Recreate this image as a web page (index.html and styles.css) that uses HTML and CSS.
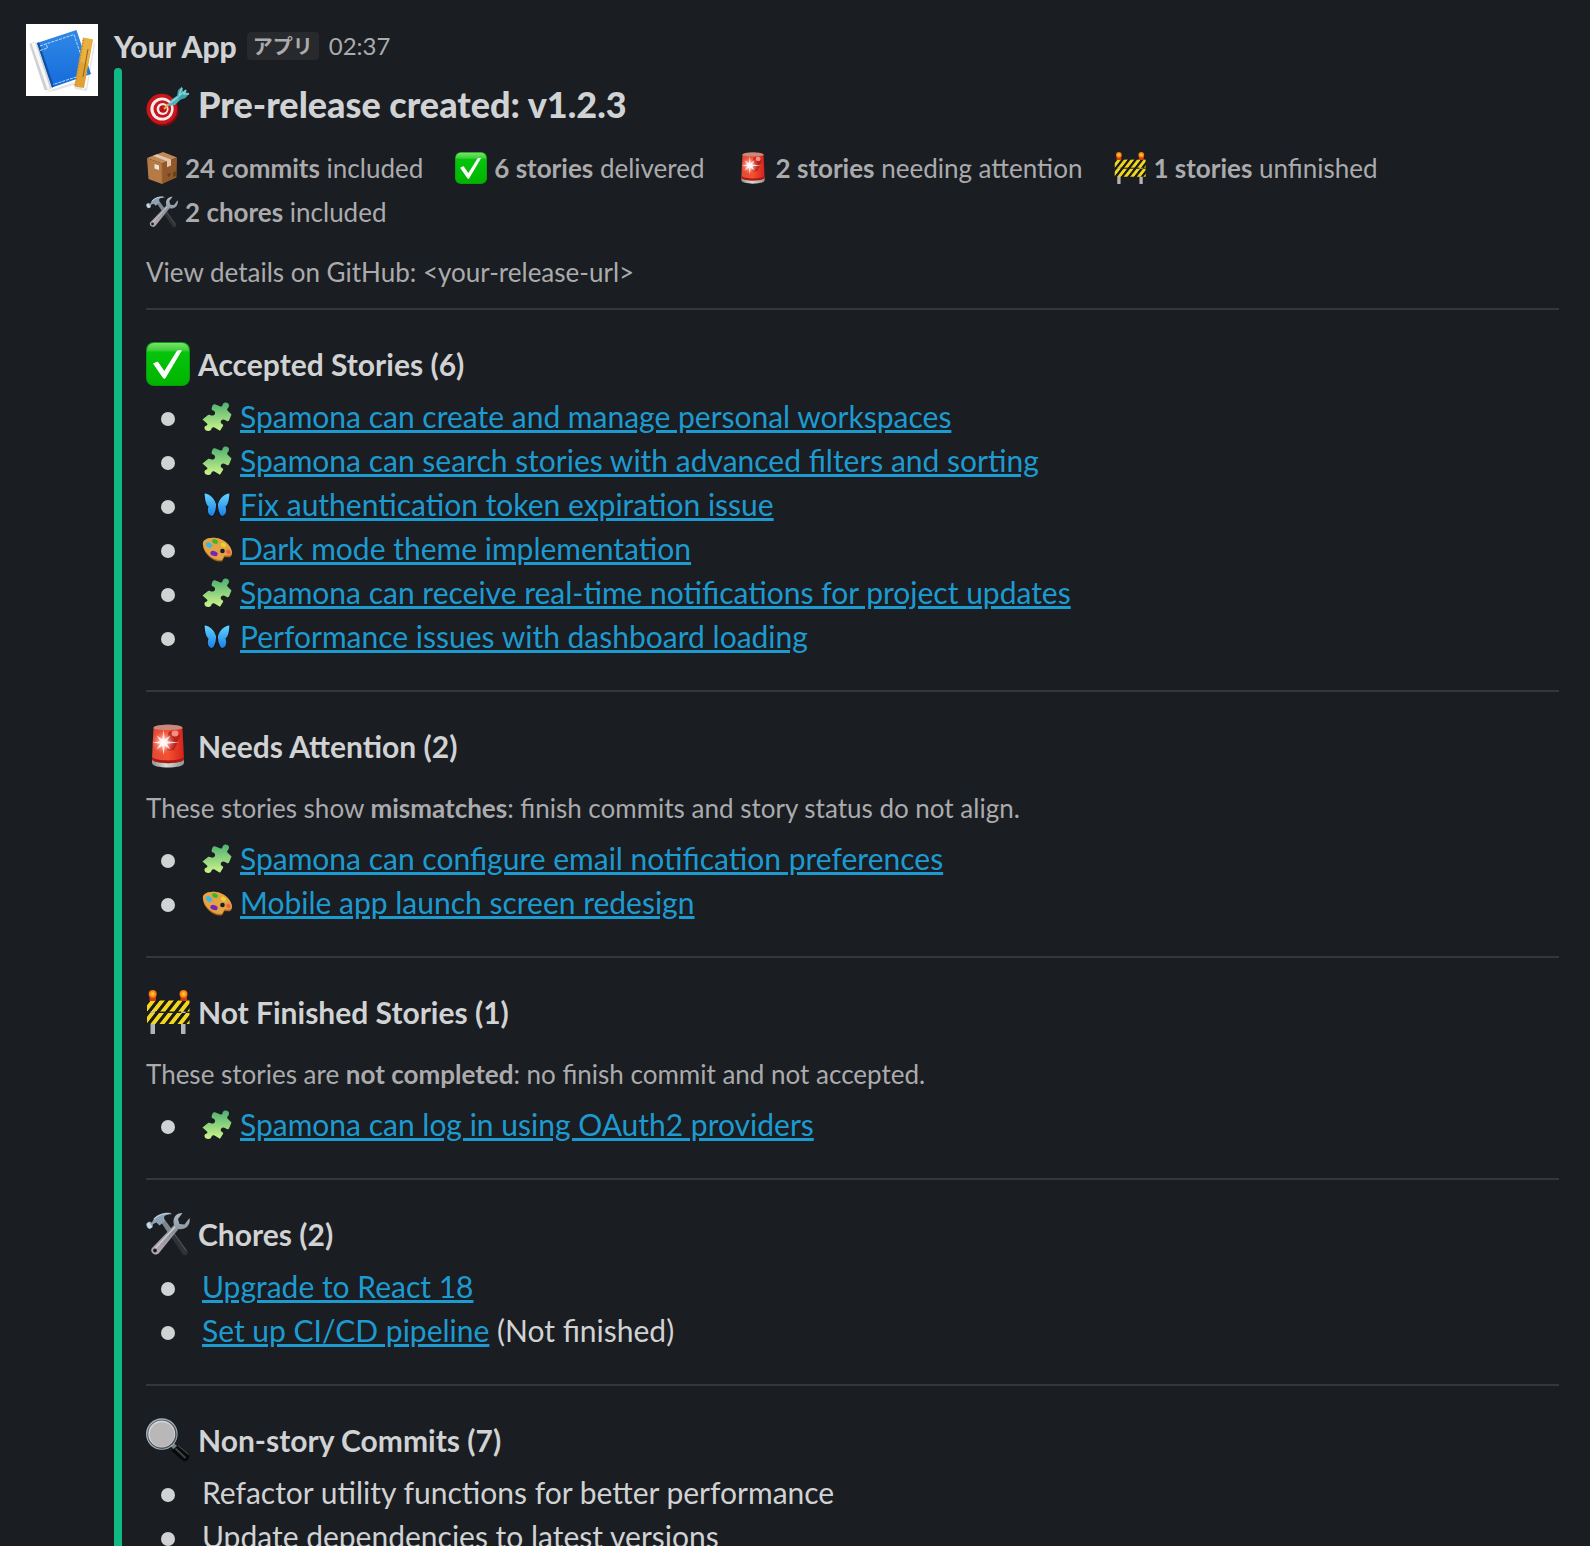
FILE: index.html
```html
<!DOCTYPE html>
<html lang="en">
<head>
<meta charset="utf-8">
<meta name="viewport" content="width=device-width, initial-scale=1">
<title>Pre-release created: v1.2.3</title>
<link rel="stylesheet" href="styles.css">
</head>
<body>
<svg class="sprite" aria-hidden="true">
  <defs>
    <linearGradient id="g-check" x1="0" y1="0" x2="0" y2="1"><stop offset="0" stop-color="#7be070"/><stop offset=".17" stop-color="#3fd03a"/><stop offset=".22" stop-color="#06c40c"/><stop offset="1" stop-color="#00b400"/></linearGradient>
    <linearGradient id="g-puzzle" x1="0" y1="0" x2="0" y2="1"><stop offset="0" stop-color="#4db072"/><stop offset="1" stop-color="#cdf58a"/></linearGradient>
    <linearGradient id="g-wing" x1="0" y1="0" x2="0" y2="1"><stop offset="0" stop-color="#63d4ff"/><stop offset="1" stop-color="#1b7fe6"/></linearGradient>
    <linearGradient id="g-siren" x1="0" y1="0" x2="1" y2="0"><stop offset="0" stop-color="#e04a38"/><stop offset=".5" stop-color="#f4502f"/><stop offset="1" stop-color="#d3221c"/></linearGradient>
    <radialGradient id="g-flare"><stop offset="0" stop-color="#fff"/><stop offset=".35" stop-color="#ffc9c4" stop-opacity=".8"/><stop offset="1" stop-color="#ff6a55" stop-opacity="0"/></radialGradient>
    <radialGradient id="g-lamp"><stop offset="0" stop-color="#ffe04a"/><stop offset=".5" stop-color="#ff9d18"/><stop offset="1" stop-color="#ee6a08"/></radialGradient>
    <linearGradient id="g-steel" x1="0" y1="0" x2="0" y2="1"><stop offset="0" stop-color="#a9bccb"/><stop offset=".45" stop-color="#8b929b"/><stop offset="1" stop-color="#b9aaae"/></linearGradient>
    <linearGradient id="g-base" x1="0" y1="0" x2="1" y2="0"><stop offset="0" stop-color="#8e9290"/><stop offset=".45" stop-color="#d9dbd8"/><stop offset="1" stop-color="#8e9290"/></linearGradient>
    <linearGradient id="g-book" x1="0" y1="0" x2="0" y2="1"><stop offset="0" stop-color="#3089e6"/><stop offset="1" stop-color="#146bdc"/></linearGradient>
    <pattern id="p-stripe" width="9" height="12" patternUnits="userSpaceOnUse" patternTransform="skewX(-38)"><rect width="9" height="12" fill="#f2d81c"/><rect width="4" height="12" fill="#1b1a17"/></pattern>
  </defs>

  <symbol id="target" viewBox="0 0 44 44">
    <ellipse cx="17" cy="26.500" rx="15.500" ry="15.500" fill="#7d0b10"/>
    <circle cx="15.800" cy="25" r="15.300" fill="#c9151b"/>
    <circle cx="16" cy="25" r="11.600" fill="#f3ecec"/>
    <circle cx="16.300" cy="25" r="8.800" fill="#c9151b"/>
    <circle cx="16.600" cy="25" r="6" fill="#f3ecec"/>
    <circle cx="17" cy="25" r="3.800" fill="#b81218"/>
    <path d="M18 25l5-5" stroke="#e2b13a" stroke-width="2.200"/>
    <path d="M22 22l3-6 7-5 3 4-6 6z" fill="#4fb3bd"/>
    <path d="M24 19l8-6" stroke="#8fdde2" stroke-width="1.500"/>
    <path d="M31 12l1-6 4-3.500 1 5.500 6.500 1-4 5-6 2z" fill="#3f9eaa"/>
    <path d="M32 13l8-7-2 4 5 0M33 11l3-7" stroke="#7ed3da" stroke-width="1.600" fill="none"/>
  </symbol>

  <symbol id="package" viewBox="0 0 32 32">
    <path d="M1 6L17 0l14 5.500-15 6z" fill="#c08a56"/>
    <path d="M1 6l15 5.500V32L2.500 27z" fill="#b57a45"/>
    <path d="M31 5.500l-15 6V32l14.500-6.500z" fill="#91582c"/>
    <path d="M7 3.800l4-1.500 14 5.200v6l-4 1.700V9.300z" fill="#e3c8ad"/>
    <path d="M8.500 12l4.500 1.500v4.500l-4.500-1.500z" fill="#eee6df"/>
    <path d="M21 22l2-.5 2-1-1.500 4-1 .5zM27 20.500l3-1.200v4.500l-3 1.200z" fill="#6b3f1c"/>
    <path d="M16 11.500V32" stroke="#a56d3b" stroke-width=".8"/>
  </symbol>

  <symbol id="check" viewBox="0 0 44 44">
    <rect width="44" height="44" rx="8" fill="#079c10"/>
    <rect x="1" y="1" width="42" height="42" rx="7" fill="url(#g-check)"/>
    <path d="M7 21.500l4-1.800c1 0 1.300.4 1.800 1.200L18.300 29 30.500 9.500c.6-1 1.200-1.300 2.200-1.300H36L19.600 36c-.6 1-2 1-2.600 0z" fill="#fff"/>
  </symbol>

  <symbol id="siren" viewBox="0 0 44 44">
    <path d="M6 35h32v4c0 6-32 6-32 0z" fill="url(#g-base)"/>
    <path d="M7.500 4C7.500-.3 36.500-.3 36.500 4L38 35c0 5.500-32 5.500-32 0z" fill="url(#g-siren)"/>
    <path d="M6.200 33c3 4.500 28.600 4.500 31.600 0l.2 2c0 5.500-32 5.500-32 0z" fill="#a91813"/>
    <path d="M7.500 4C7.500-.3 36.500-.3 36.500 4c0 2.600-29 2.600-29 0z" fill="#c88a80"/>
    <path d="M22 9c5-4 12-2 12 3 0 4-3 4-3 8l-3 6-7 1z" fill="#b8241c"/>
    <ellipse cx="29" cy="9.500" rx="3.500" ry="3" fill="#f58f83"/>
    <circle cx="17.500" cy="18.500" r="12" fill="url(#g-flare)"/>
    <path d="M17.500 5.500l1.200 9.800 5.800-3.800-3.700 5.800 12.200 1.200-12.200 1.200 3.700 5.800-5.800-3.700-1.200 9.700-1.200-9.700-5.800 3.700 3.700-5.800-7.700-1.200 7.700-1.200-3.700-5.800 5.800 3.800z" fill="#fff" opacity=".8"/>
  </symbol>

  <symbol id="barrier" viewBox="0 0 44 44">
    <path d="M4.500 10h4.500v34H4.500zM35 10h4.500v34H35z" fill="#b4b4b6"/>
    <rect x="1" y="10.500" width="42.500" height="11" fill="url(#p-stripe)"/>
    <rect x="1" y="23" width="42.500" height="11" fill="url(#p-stripe)"/>
    <path d="M3.500 6.500h6.500v4.500H3.500zM34.500 6.500H41v4.500h-6.500z" fill="#d63a10"/>
    <circle cx="6.700" cy="4" r="4" fill="url(#g-lamp)"/>
    <circle cx="37.500" cy="4" r="4" fill="url(#g-lamp)"/>
  </symbol>

  <symbol id="tools" viewBox="0 0 44 44">
    <path d="M15 10l4-2 22.500 31c1.500 3-3 6-5 3z" fill="#303235"/>
    <path d="M15 10l4-2 8 11-4 3.500z" fill="#7e858d"/>
    <path d="M27 20l13.500 19" stroke="#56595d" stroke-width="1"/>
    <path d="M28 13C26 6 30 1 36.500 1l-4.500 6 1.500 5 5 .5L43.500 6c1.500 7-4 12.500-11 11L13 41c-3.500 4-10-1-7-5z" fill="url(#g-steel)"/>
    <path d="M9 36.500L29 15" stroke="#d2d3d8" stroke-width="1.200"/>
    <circle cx="9" cy="38.500" r="1.900" fill="#1a1d21"/>
    <path d="M.5 11.500L3 9.500l3 1 1.500-3C11 2 18 0 25 1l.5 1.200c-4 0-7 1.200-7.500 3L19 9l-5.500 4.500-3-3L7 12l-.5 3L4 17c-2 0-4.500-3-3.500-5.500z" fill="#8ea1b2"/>
    <path d="M1 11.500l2-1.500 3.500 5-2.500 1.500c-2 0-3.500-3-3-5z" fill="#c5d9e8"/>
    <path d="M8 7c4-4 8-5.500 15-5.500" stroke="#c2d4e2" stroke-width="1.200" fill="none"/>
  </symbol>

  <symbol id="magnifier" viewBox="0 0 44 44">
    <path d="M25.500 33l6.500-6 10.500 9c3 3-2 9-5.500 7z" fill="#08090a"/>
    <path d="M29.500 30.500l10 9.500" stroke="#3f4144" stroke-width="2"/>
    <path d="M32 27.500l10.500 9" stroke="#55585b" stroke-width="1"/>
    <path d="M24 27.500l3-3 4 3.500-3.500 3z" fill="#7c8185"/>
    <circle cx="15.800" cy="16" r="15.800" fill="#9fb0bf"/>
    <circle cx="16" cy="16.300" r="14.600" fill="#4c5055"/>
    <circle cx="15.700" cy="16" r="13.500" fill="#d6d4d4"/>
    <circle cx="16" cy="16.500" r="12.300" fill="#b9b7b8"/>
  </symbol>

  <symbol id="puzzle" viewBox="0 0 30 30">
    <path d="M10.500 3.500Q11.500 2 13 2.300L18.500 4.500C21 5 20 3 21.200 1.500 22.500-.3 27 0 27 3.200 27 6.500 24 6.500 25.500 8.500L29.500 12.500 27 18.500C26 20 24.500 19 23.200 18 20.500 16.500 18 18.500 19 21 20 22.500 21.800 22 21 24L18 28.800 12.500 25.500C10.500 24.500 9.800 26 9 27.800 7.500 30 2 29 2.500 25.500 3 23 6.500 24 5 21.500L.5 17.500 6 13C8 12 8.800 13.800 11 13.600 13.800 13 13.800 9 11 8.500 9 8 9.500 6 10.500 3.500Z" fill="url(#g-puzzle)"/>
  </symbol>

  <symbol id="butterfly" viewBox="0 0 30 30">
    <path d="M1 3c6 0 11 4 13.500 11L16 14C18 7 23 3 29 3c-1 6-2 10-5 13 2 5-1 10-4 11-3-1-4-4-5-7-1 3-2 6-5 7-4-1-6-6-4-11C3 13 2 9 1 3z" fill="#0c1220"/>
    <path d="M2.500 3.500C8 4 12 8 14.200 14.500L13.500 20C12.500 23 11.500 26 9.500 26 6 25 5 21 6.500 16.500 3.500 14 3 9 2.500 3.500zM27.500 3.500C22 4 18 8 15.800 14.500L16.500 20C17.500 23 18.500 26 20.500 26 24 25 25 21 23.500 16.500 26.500 14 27 9 27.500 3.500z" fill="url(#g-wing)"/>
    <path d="M15 10v12" stroke="#241b1c" stroke-width="1.500"/>
  </symbol>

  <symbol id="palette" viewBox="0 0 30 30">
    <path d="M1 12C0 6 6 3 14 4c8 1 15 7 16 15 0 6-5 4-7 4s-1 4-4 4.500C11 28 2 20 1 12z" fill="#a9671c"/>
    <path d="M1 10.500C0 6 6 3 14 4c8 1 15 7 16 14 0 5-5 3.500-7 3.500s-1 4-4 4.500C11 26.500 2 19 1 10.500z" fill="#e2a445"/>
    <circle cx="20.500" cy="17" r="2.300" fill="#1a1d21"/>
    <ellipse cx="7" cy="11" rx="3.400" ry="2.500" transform="rotate(35 7 11)" fill="#3fb5e6"/>
    <ellipse cx="13" cy="7.500" rx="3" ry="2.200" transform="rotate(25 13 7.500)" fill="#3fb52c"/>
    <ellipse cx="21.500" cy="11" rx="2.800" ry="2" transform="rotate(35 21.500 11)" fill="#f0d02c"/>
    <ellipse cx="26.500" cy="18" rx="2.600" ry="2.200" transform="rotate(45 26.500 18)" fill="#ee6250"/>
    <ellipse cx="12" cy="19.500" rx="3.800" ry="2.500" transform="rotate(20 12 19.500)" fill="#7a23b8"/>
  </symbol>
</svg>

<main class="message">
  <svg class="avatar" viewBox="0 0 72 72" role="img" aria-label="Your App">
    <rect width="72" height="72" fill="#fff"/>
    <path d="M20 68l7-3 22-7 8 7 3-1 8-46 1 2-8 47-12-2-1-4-20 6z" fill="#e4e5e7"/>
    <path d="M3.500 20.500c1-2 5-2.500 7.500-1.500l15 44c-1 2-5 4-7.500 3z" fill="#cfd0d3"/>
    <path d="M5.500 19.500c1-1 3-1 4-.5l14.500 45.500-2.500 1z" fill="#f7f7f8"/>
    <path d="M11 19l39.500-13L65 50 26 63.500z" fill="url(#g-book)"/>
    <path d="M11 19l2-.7L28 62.800l-2 .7z" fill="#0f4fa5"/>
    <path d="M14 22L48 10.500l13 39L27 60.500M14 26.500l7.500-2.500-1.500-4.500" fill="none" stroke="#b8d8fa" stroke-width="1" stroke-dasharray="3 1"/>
    <path d="M57 13.500l10 2L58 64l-9.500-1.500z" fill="#e0a233"/>
    <path d="M58.500 14l8 1.500-4.500 24-8-1.500z" fill="#e9b044"/>
    <path d="M62 25l-5 28" stroke="#8e641c" stroke-width="1"/>
    <path d="M57.500 16l-8.500 46" stroke="#b9852a" stroke-width="1.500" stroke-dasharray="1 2"/>
  </svg>

  <article class="body">
    <header class="byline">
      <span class="sender">Your App</span>
      <span class="badge" lang="ja">アプリ</span>
      <time class="time" datetime="02:37">02:37</time>
    </header>

    <div class="attachment">
      <h1 class="title"><svg class="icon-lg" aria-hidden="true"><use href="#target"/></svg>Pre-release created: v1.2.3</h1>

      <div class="stats">
        <span class="stat"><svg class="icon-md" aria-hidden="true"><use href="#package"/></svg><span><b>24 commits</b> included</span></span>
        <span class="stat"><svg class="icon-md" aria-hidden="true"><use href="#check"/></svg><span><b>6 stories</b> delivered</span></span>
        <span class="stat"><svg class="icon-md" aria-hidden="true"><use href="#siren"/></svg><span><b>2 stories</b> needing attention</span></span>
        <span class="stat"><svg class="icon-md" aria-hidden="true"><use href="#barrier"/></svg><span><b>1 stories</b> unfinished</span></span>
        <span class="stat"><svg class="icon-md" aria-hidden="true"><use href="#tools"/></svg><span><b>2 chores</b> included</span></span>
      </div>
      <p class="note">View details on GitHub: &lt;your-release-url&gt;</p>

      <section class="group">
        <h2 class="heading"><svg class="icon-lg" aria-hidden="true"><use href="#check"/></svg>Accepted Stories (6)</h2>
        <ul class="list">
          <li><svg class="icon-sm" aria-hidden="true"><use href="#puzzle"/></svg><a href="#">Spamona can create and manage personal workspaces</a></li>
          <li><svg class="icon-sm" aria-hidden="true"><use href="#puzzle"/></svg><a href="#">Spamona can search stories with advanced filters and sorting</a></li>
          <li><svg class="icon-sm" aria-hidden="true"><use href="#butterfly"/></svg><a href="#">Fix authentication token expiration issue</a></li>
          <li><svg class="icon-sm" aria-hidden="true"><use href="#palette"/></svg><a href="#">Dark mode theme implementation</a></li>
          <li><svg class="icon-sm" aria-hidden="true"><use href="#puzzle"/></svg><a href="#">Spamona can receive real-time notifications for project updates</a></li>
          <li><svg class="icon-sm" aria-hidden="true"><use href="#butterfly"/></svg><a href="#">Performance issues with dashboard loading</a></li>
        </ul>
      </section>

      <section class="group">
        <h2 class="heading"><svg class="icon-lg" aria-hidden="true"><use href="#siren"/></svg>Needs Attention (2)</h2>
        <p class="note">These stories show <b>mismatches</b>: finish commits and story status do not align.</p>
        <ul class="list">
          <li><svg class="icon-sm" aria-hidden="true"><use href="#puzzle"/></svg><a href="#">Spamona can configure email notification preferences</a></li>
          <li><svg class="icon-sm" aria-hidden="true"><use href="#palette"/></svg><a href="#">Mobile app launch screen redesign</a></li>
        </ul>
      </section>

      <section class="group">
        <h2 class="heading"><svg class="icon-lg" aria-hidden="true"><use href="#barrier"/></svg>Not Finished Stories (1)</h2>
        <p class="note">These stories are <b>not completed</b>: no finish commit and not accepted.</p>
        <ul class="list">
          <li><svg class="icon-sm" aria-hidden="true"><use href="#puzzle"/></svg><a href="#">Spamona can log in using OAuth2 providers</a></li>
        </ul>
      </section>

      <section class="group">
        <h2 class="heading"><svg class="icon-lg" aria-hidden="true"><use href="#tools"/></svg>Chores (2)</h2>
        <ul class="list">
          <li><a href="#">Upgrade to React 18</a></li>
          <li><a href="#">Set up CI/CD pipeline</a> (Not finished)</li>
        </ul>
      </section>

      <section class="group">
        <h2 class="heading"><svg class="icon-lg" aria-hidden="true"><use href="#magnifier"/></svg>Non-story Commits (7)</h2>
        <ul class="list">
          <li>Refactor utility functions for better performance</li>
          <li>Update dependencies to latest versions</li>
        </ul>
      </section>
    </div>
  </article>
</main>
</body>
</html>
```

FILE: styles.css
```css
:root {
  --bg: #1a1d21;
  --text: #d1d2d3;
  --muted: #ababad;
  --link: #1d9bd1;
  --line: #35373b;
  --accent: #10b981;
}

* {
  box-sizing: border-box;
}

body {
  margin: 0;
  height: 100vh;
  overflow: hidden;
  background: var(--bg);
  color: var(--text);
  font: 30px/44px Lato, "Noto Sans CJK JP", sans-serif;
}

h1, h2, p, ul {
  margin: 0;
  padding: 0;
}

.sprite {
  position: absolute;
  width: 0;
  height: 0;
}

.message {
  display: flex;
  align-items: flex-start;
  gap: 16px;
  padding: 24px 31px 0 26px;
}

.avatar {
  flex: none;
  width: 72px;
  height: 72px;
}

.body {
  flex: 1;
  min-width: 0;
}

.byline {
  display: flex;
  align-items: center;
  gap: 10px;
  height: 44px;
}

.sender,
.title {
  font-weight: 900;
}

.badge {
  padding: 0 6px;
  border-radius: 4px;
  background: #28292d;
  color: var(--muted);
  font: 700 20px/28px "Noto Sans CJK JP", sans-serif;
}

.time {
  color: var(--muted);
  font-size: 24px;
}

.attachment {
  position: relative;
  padding: 16px 0 0 32px;
}

.attachment::before {
  content: "";
  position: absolute;
  top: 0;
  bottom: 0;
  left: 0;
  width: 8px;
  border-radius: 8px;
  background: var(--accent);
}

.title,
.heading {
  display: flex;
  gap: 8px;
}

.title {
  font-size: 36px;
  line-height: 40px;
}

.heading {
  font-size: 30px;
  font-weight: 700;
}

.icon-lg {
  flex: none;
  width: 44px;
  height: 44px;
}

.icon-md {
  flex: none;
  width: 32px;
  height: 32px;
}

.icon-sm {
  width: 30px;
  height: 30px;
  margin-right: 8px;
  vertical-align: -4px;
}

.stats {
  display: flex;
  flex-wrap: wrap;
  column-gap: 32px;
  margin-top: 18px;
}

.stat {
  display: flex;
  align-items: center;
  gap: 7px;
}

.stats,
.note {
  color: var(--muted);
  font-size: 26px;
}

.note {
  padding: 16px 0 14px;
}

.group {
  padding-top: 32px;
  border-top: 2px solid var(--line);
}

.group .note {
  padding: 18px 0 6px;
}

.list {
  padding: 8px 0 32px;
  list-style: none;
}

.note + .list {
  padding-top: 0;
}

.list li {
  position: relative;
  padding-left: 56px;
}

.list li::before {
  content: "";
  position: absolute;
  top: 18px;
  left: 15px;
  width: 14px;
  height: 14px;
  border-radius: 50%;
  background: var(--text);
}

a {
  color: var(--link);
  text-decoration: underline 3px;
  text-underline-offset: 2px;
}
```
